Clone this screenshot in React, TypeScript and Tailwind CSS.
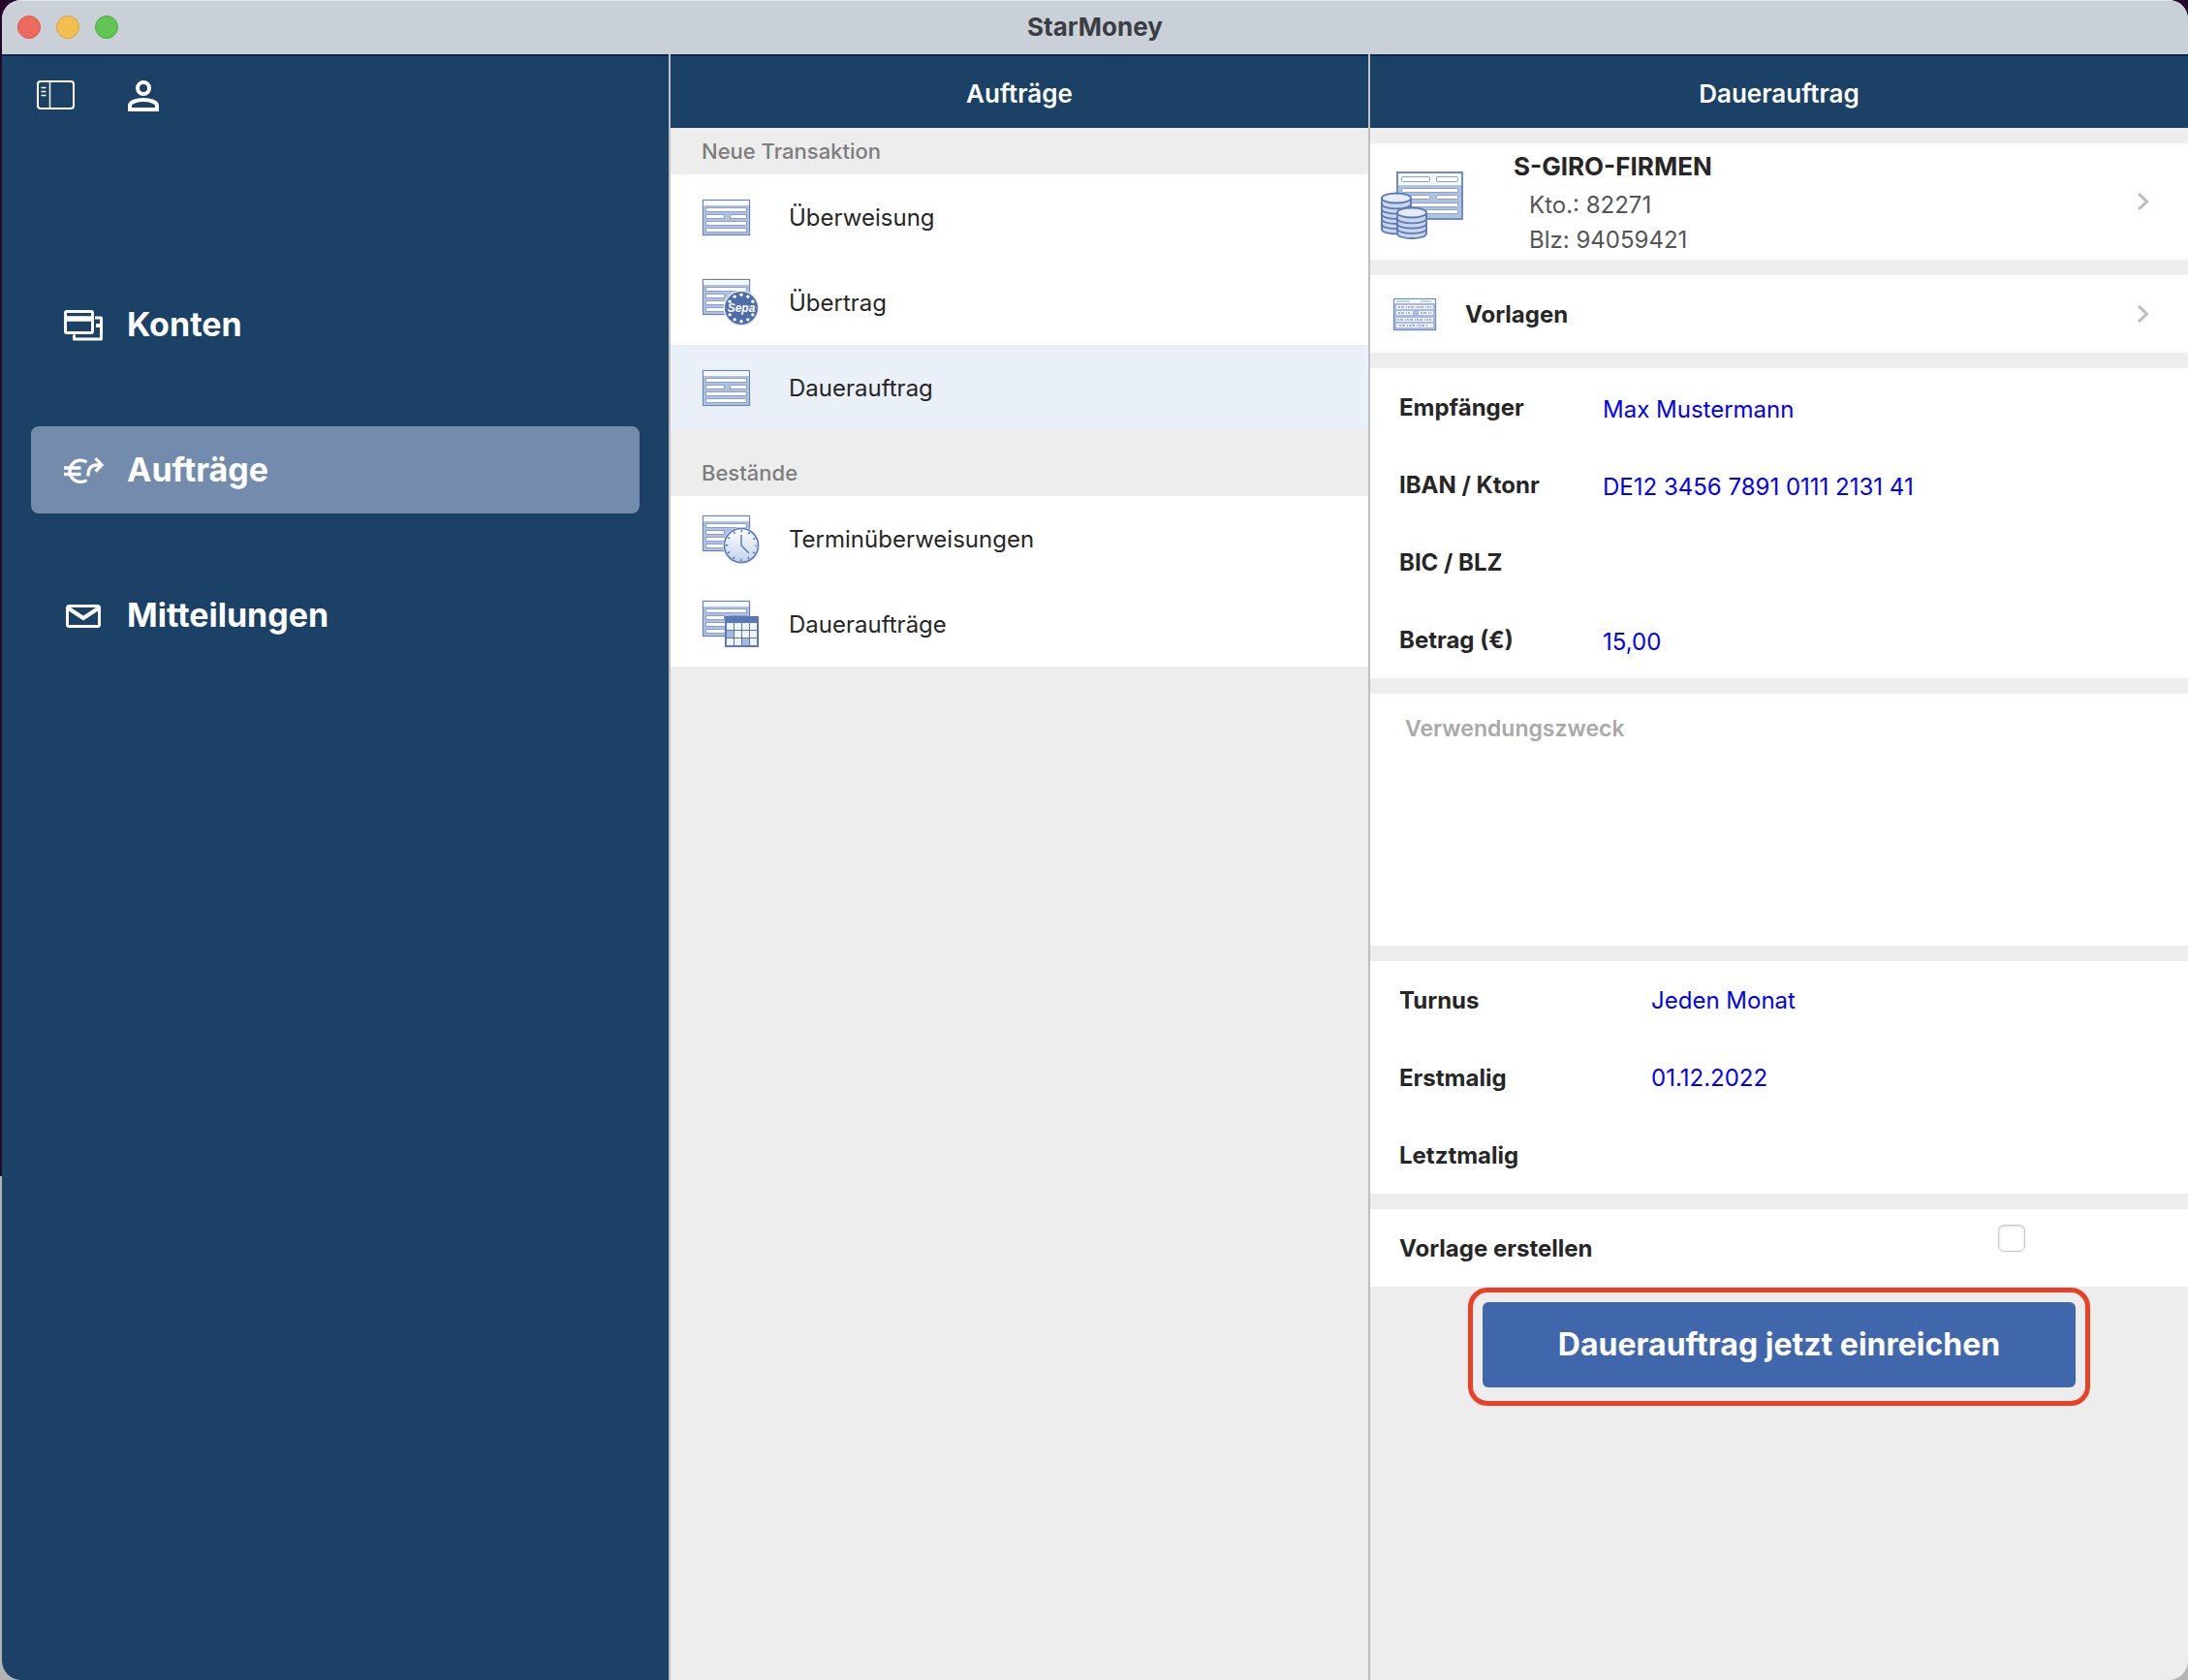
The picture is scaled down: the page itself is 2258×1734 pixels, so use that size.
import type { ReactNode } from 'react';

const NAV = [
  { id: 'konten', label: 'Konten', icon: <AccountsIcon /> },
  { id: 'auftraege', label: 'Aufträge', icon: <OrdersIcon />, active: true },
  { id: 'mitteilungen', label: 'Mitteilungen', icon: <MailIcon /> },
];

const NEW_TRANSACTIONS = [
  { id: 'ueberweisung', label: 'Überweisung', icon: <FormIcon /> },
  { id: 'uebertrag', label: 'Übertrag', icon: <FormIcon badge={<SepaBadge />} /> },
  { id: 'dauerauftrag', label: 'Dauerauftrag', icon: <FormIcon />, active: true },
];

const HOLDINGS = [
  { id: 'termin', label: 'Terminüberweisungen', icon: <FormIcon badge={<ClockBadge />} /> },
  { id: 'dauer', label: 'Daueraufträge', icon: <FormIcon badge={<CalendarBadge />} /> },
];

const RECIPIENT_FIELDS = [
  { id: 'empfaenger', label: 'Empfänger', value: 'Max Mustermann' },
  { id: 'iban', label: 'IBAN / Ktonr', value: 'DE12 3456 7891 0111 2131 41' },
  { id: 'bic', label: 'BIC / BLZ', value: '' },
  { id: 'betrag', label: 'Betrag (€)', value: '15,00' },
];

const SCHEDULE_FIELDS = [
  { id: 'turnus', label: 'Turnus', value: 'Jeden Monat' },
  { id: 'erstmalig', label: 'Erstmalig', value: '01.12.2022' },
  { id: 'letztmalig', label: 'Letztmalig', value: '' },
];

function SidebarIcon() {
  return (
    <svg width="40" height="32" viewBox="0 0 40 32" fill="none" stroke="white" strokeWidth="2">
      <rect x="1" y="1" width="37" height="28" rx="3" />
      <path d="M13.5 1v28M4.5 7.5h5M4.5 11.5h5M4.5 15.5h5" strokeWidth="1.5" />
    </svg>
  );
}

function PersonIcon() {
  return (
    <svg width="32" height="32" viewBox="0 0 32 32" fill="none" stroke="white" strokeWidth="4">
      <circle cx="16" cy="8" r="6" />
      <path d="M2 30v-4c0-4 8-6 14-6s14 2 14 6v4z" />
    </svg>
  );
}

function AccountsIcon() {
  return (
    <svg width="42" height="34" viewBox="0 -1 42 34" fill="none" stroke="white" strokeWidth="3">
      <rect x="2.5" y="2.5" width="28" height="22" rx="1.5" />
      <path d="M2 10h29" strokeWidth="5.5" />
      <path d="M33 9h6.5v22h-28v-4.5" strokeLinejoin="round" />
      <path d="M34 17h6" strokeWidth="4" />
    </svg>
  );
}

function OrdersIcon() {
  return (
    <svg width="42" height="34" viewBox="0 -1 42 34" fill="none" stroke="white" strokeWidth="3.3">
      <path d="M24.5 8A11.2 11.2 0 1 0 24.5 26.5" />
      <path d="M1 14h17.5M1 20.5h17.5" />
      <path d="M26 22.5v-1.5c0-6.5 3-10 9-10h4.500M33.5 4l6.5 7-6.5 6.5" />
    </svg>
  );
}

function MailIcon() {
  return (
    <svg width="42" height="34" viewBox="0 -1 42 34" fill="none" stroke="white" strokeWidth="3">
      <rect x="4.5" y="6.5" width="33" height="21" rx="2" />
      <path d="M5 8.5l16 10.5 16-10.5" strokeWidth="4" />
    </svg>
  );
}

/* Payment slip, optionally with a round or square badge in its lower right corner */
function FormIcon({ badge }: { badge?: ReactNode }) {
  return (
    <svg width="62" height="54" viewBox="0 0 62 54" className="shrink-0">
      <g transform={badge ? 'translate(0 0)' : 'translate(0 6)'}>
        <rect x="0.5" y="1.5" width="50" height="38" fill="#d7e1f2" />
        <rect x="1.5" y="2.5" width="48" height="36" fill="#afc3e1" stroke="#6580bb" />
        <rect x="2" y="3" width="47" height="5" fill="#f6f9fd" />
        <g fill="white" stroke="#8c9fd0">
          <rect x="4.5" y="10.5" width="42" height="4" />
          <rect x="4.5" y="17.5" width="19" height="4" />
          <rect x="29.5" y="17.5" width="17" height="4" />
          <rect x="4.5" y="24.5" width="42" height="4" />
          <rect x="4.5" y="31.5" width="42" height="4" />
        </g>
      </g>
      {badge}
    </svg>
  );
}

function SepaBadge() {
  const stars = Array.from({ length: 12 }, (_, i) => (i * Math.PI) / 6);
  return (
    <g>
      <circle cx="41" cy="32" r="18.5" fill="#e9edf6" />
      <circle cx="41" cy="32" r="17" fill="#4f6dab" />
      {stars.map((a) => (
        <circle key={a} cx={41 + 13.7 * Math.sin(a)} cy={32 - 13.7 * Math.cos(a)} r="1.7" fill="white" />
      ))}
      <rect x="26" y="28" width="30" height="8" fill="#4f6dab" />
      <text
        x="41"
        y="36"
        textAnchor="middle"
        fill="white"
        fontSize="12"
        fontWeight="700"
        fontStyle="italic"
        fontFamily="Liberation Sans, sans-serif"
      >
        Sepa
      </text>
    </g>
  );
}

function ClockBadge() {
  return (
    <g>
      <defs>
        <linearGradient id="clock" x1="0" y1="0" x2="0" y2="1">
          <stop offset="0" stopColor="#ffffff" />
          <stop offset="1" stopColor="#c3d2ea" />
        </linearGradient>
      </defs>
      <circle cx="41" cy="33" r="19" fill="#dfe6f3" />
      <circle cx="41" cy="33" r="17.5" fill="url(#clock)" stroke="#5b78b8" strokeWidth="1.5" />
      <circle
        cx="41"
        cy="33"
        r="15"
        fill="none"
        stroke="#5b78b8"
        strokeWidth="2.5"
        strokeDasharray="1.5 6.354"
        strokeDashoffset="0.75"
      />
      <path d="M41 22v11l8 8" fill="none" stroke="#5b78b8" strokeWidth="1.5" />
    </g>
  );
}

function CalendarBadge() {
  return (
    <g>
      <rect x="24" y="18" width="35" height="32" fill="#5a78b3" />
      {[0, 1, 2].map((row) =>
        [0, 1, 2, 3].map((col) => (
          <rect
            key={`${row}-${col}`}
            x={26 + col * 8}
            y={25 + row * 8}
            width="7"
            height="7"
            fill={(row === 1 && col === 0) || (row === 2 && col === 2) ? '#a9b7db' : '#eff3fa'}
          />
        )),
      )}
    </g>
  );
}

/* Coins are drawn bottom up so that each one covers the rim below it */
function CoinStack({ x, y, coins }: { x: number; y: number; coins: number }) {
  const levels = Array.from({ length: coins }, (_, i) => coins - 1 - i);
  return (
    <g stroke="#5b78b8" strokeWidth="1.8">
      {levels.map((i) => (
        <path key={i} d={`M${x} ${y + i * 5.2}v6c0 6.5 30 6.5 30 0v-6z`} fill="#c9d6ec" />
      ))}
      <ellipse cx={x + 15} cy={y} rx="15" ry="5" fill="#e6ecf7" />
    </g>
  );
}

function AccountIcon() {
  return (
    <svg width="88" height="78" viewBox="0 0 88 78" className="shrink-0">
      <rect x="18" y="9" width="67" height="48" fill="#afc3e1" stroke="#6f8bc4" strokeWidth="2" />
      <rect x="19" y="10" width="65" height="12" fill="#f6f9fd" />
      <g fill="white" stroke="#8c9fd0">
        <rect x="22.5" y="13.5" width="29" height="5" rx="1" />
        <rect x="58.5" y="13.5" width="22" height="5" rx="1" />
        <rect x="22.5" y="25.5" width="58" height="4" rx="1" />
        <rect x="22.5" y="32.5" width="29" height="4" rx="1" />
        <rect x="58.5" y="32.5" width="22" height="4" rx="1" />
        <rect x="22.5" y="40.5" width="58" height="4" rx="1" />
        <rect x="22.5" y="47.5" width="58" height="4" rx="1" />
      </g>
      <CoinStack x={2} y={35.5} coins={6} />
      <CoinStack x={18} y={50.5} coins={4} />
    </svg>
  );
}

function TemplateIcon() {
  return (
    <svg width="46" height="36" viewBox="0 0 46 36" className="shrink-0">
      <rect x="0.5" y="1.5" width="45" height="34" fill="#d7e1f2" />
      <rect x="1.5" y="2.5" width="43" height="32" fill="#a9bcdf" stroke="#7089c3" />
      <rect x="2" y="3" width="42" height="4" fill="#f6f9fd" />
      <path d="M4 5h14M29 5h11" stroke="#b9c3e2" strokeWidth="1.5" />
      <g fill="#eef1fa">
        <rect x="4" y="9" width="38" height="4" />
        <rect x="4" y="15" width="17" height="4" />
        <rect x="27" y="15" width="15" height="4" />
        <rect x="4" y="22" width="38" height="4" />
        <rect x="4" y="28" width="38" height="4" />
      </g>
      <g stroke="#8f9fd2" strokeWidth="1.5" strokeDasharray="2 1 3 2 1 1">
        <path d="M6 11h34M6 17h13M29 17h11M5 24h35M7 30h30" />
      </g>
    </svg>
  );
}

function Chevron() {
  return (
    <svg width="12" height="20" viewBox="0 0 12 20" fill="none" stroke="#bdbdbd" strokeWidth="3" className="shrink-0">
      <path d="M1 2l8.5 8L1 18" />
    </svg>
  );
}

function ColumnHeader({ children }: { children: ReactNode }) {
  return (
    <header className="flex h-[76px] items-center justify-center border-t-2 border-[#0d2750] bg-[#1b4166] pt-1">
      <h2 className="text-[26px] leading-8 font-semibold text-white">{children}</h2>
    </header>
  );
}

function OrderList({ items }: { items: { id: string; label: string; icon: ReactNode; active?: boolean }[] }) {
  return (
    <ul className="bg-white">
      {items.map((item) => (
        <li key={item.id}>
          <button
            type="button"
            className={`flex h-[88px] w-full items-center gap-7 px-8 pt-0.5 text-left text-[24px] leading-8 text-[#262626] ${item.active ? 'bg-[#eaf0f8]' : ''}`}
          >
            {item.icon}
            {item.label}
          </button>
        </li>
      ))}
    </ul>
  );
}

function Field({ id, label, value, wide }: { id: string; label: string; value: string; wide?: boolean }) {
  return (
    <div className="flex h-20 items-center px-[30px] pt-0.5">
      <label htmlFor={id} className={`shrink-0 text-[24px] leading-8 font-bold text-[#262626] ${wide ? 'w-[260px]' : 'w-[210px]'}`}>
        {label}
      </label>
      <input
        id={id}
        type="text"
        defaultValue={value}
        className={`h-10 min-w-0 flex-1 bg-transparent text-[24px] leading-8 text-[#0000f5] outline-none ${wide ? 'pb-0.5' : 'pt-0.5'}`}
      />
    </div>
  );
}

export default function App() {
  return (
    <div className="min-h-screen bg-linear-to-b from-[#25052c] from-70% to-[#b4b4b4] to-70% pl-0.5 font-['Inter',sans-serif]">
      <div className="flex min-h-screen flex-col overflow-hidden rounded-[20px] bg-[#ededed]">
        <div className="grid h-14 grid-cols-[1fr_auto_1fr] items-center border-t border-[#e4e8eb] bg-[#c9d0d8] px-4 pb-0.5">
          <div className="flex gap-4">
            <button type="button" aria-label="Schließen" className="size-6 rounded-full border border-[#d9544a] bg-[#ed6a5e]" />
            <button type="button" aria-label="Minimieren" className="size-6 rounded-full border border-[#d9a23c] bg-[#f5bf4f]" />
            <button type="button" aria-label="Vergrößern" className="size-6 rounded-full border border-[#4caa3e] bg-[#61c554]" />
          </div>
          <h1 className="text-[26px] leading-8 font-bold text-[#3a3d41]">StarMoney</h1>
        </div>

        <div className="grid flex-1 grid-cols-[688px_722px_1fr]">
          <aside className="border-t-2 border-[#0d2750] bg-[#1b4166]">
            <div className="flex items-center gap-[54px] px-9 pt-[25px]">
              <button type="button" aria-label="Seitenleiste">
                <SidebarIcon />
              </button>
              <button type="button" aria-label="Profil">
                <PersonIcon />
              </button>
            </div>
            <nav className="mt-[175px] flex flex-col gap-[60px] px-[30px]">
              {NAV.map((item) => (
                <a
                  key={item.id}
                  href={`#${item.id}`}
                  className={`flex h-[90px] items-center gap-6 rounded-lg px-[33px] text-[34px] leading-10 font-bold text-white ${item.active ? 'bg-[#738bad]' : ''}`}
                >
                  {item.icon}
                  {item.label}
                </a>
              ))}
            </nav>
          </aside>

          <section className="border-l-2 border-[#c0c0c0]">
            <ColumnHeader>Aufträge</ColumnHeader>
            <h3 className="flex h-12 items-center px-8 text-[22px] leading-8 font-medium text-[#7d7d7d]">Neue Transaktion</h3>
            <OrderList items={NEW_TRANSACTIONS} />
            <h3 className="flex h-[68px] items-end px-8 pb-2 text-[22px] leading-8 font-medium text-[#7d7d7d]">Bestände</h3>
            <OrderList items={HOLDINGS} />
          </section>

          <section className="border-l-2 border-[#c0c0c0]">
            <ColumnHeader>Dauerauftrag</ColumnHeader>
            <form className="flex flex-col gap-4 pt-4" onSubmit={(e) => e.preventDefault()}>
              <button type="button" className="flex h-[120px] items-center bg-white pr-10 pl-2.5 text-left">
                <AccountIcon />
                <span className="ml-[50px] flex-1 pt-1">
                  <span className="mb-1 block text-[26px] leading-9 font-bold text-[#262626]">S-GIRO-FIRMEN</span>
                  <span className="block pl-4 text-[24px] leading-9 text-[#555]">Kto.: 82271</span>
                  <span className="block pl-4 text-[24px] leading-9 text-[#555]">Blz: 94059421</span>
                </span>
                <Chevron />
              </button>

              <button type="button" className="flex h-20 items-center bg-white pr-10 pl-[23px] text-left">
                <TemplateIcon />
                <span className="ml-[29px] flex-1 pt-0.5 text-[24px] leading-8 font-bold text-[#262626]">Vorlagen</span>
                <Chevron />
              </button>

              <div className="bg-white">
                {RECIPIENT_FIELDS.map((field) => (
                  <Field key={field.id} {...field} />
                ))}
              </div>

              <textarea
                aria-label="Verwendungszweck"
                placeholder="Verwendungszweck"
                className="block h-[260px] w-full resize-none bg-white px-9 py-5 text-[23px] leading-8 font-semibold outline-none placeholder:text-[#a9a9a9]"
              />

              <div className="bg-white">
                {SCHEDULE_FIELDS.map((field) => (
                  <Field key={field.id} {...field} wide />
                ))}
              </div>

              <div className="flex h-20 items-start justify-between bg-white pr-[168px] pl-[30px]">
                <label htmlFor="vorlage" className="pt-[25px] text-[24px] leading-8 font-bold text-[#262626]">
                  Vorlage erstellen
                </label>
                <input
                  id="vorlage"
                  type="checkbox"
                  className="mt-4 size-7 appearance-none rounded-md border border-[#c4c4c4] bg-white shadow-[inset_0_1px_3px_rgba(0,0,0,0.15)]"
                />
              </div>

              <div className="-mt-[15px] self-center rounded-[20px] border-[5px] border-[#ea4025] px-2.5 pt-2.5 pb-3.5">
                <button type="submit" className="h-[88px] w-[612px] rounded-md bg-[#4067ab] text-[32px] leading-10 font-bold text-white">
                  Dauerauftrag jetzt einreichen
                </button>
              </div>
            </form>
          </section>
        </div>
      </div>
    </div>
  );
}
